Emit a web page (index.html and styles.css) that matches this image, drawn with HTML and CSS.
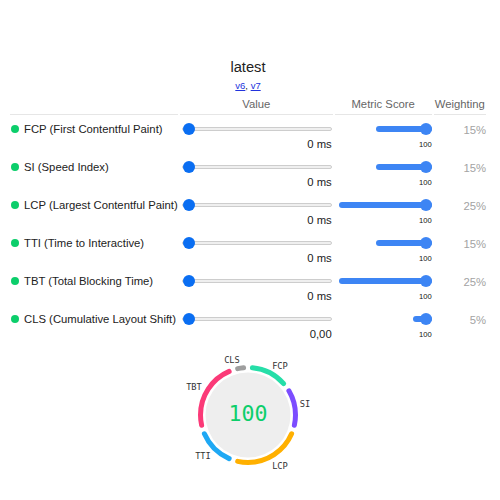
FILE: index.html
```html
<!DOCTYPE html>
<html lang="en">
<head>
    <meta charset="UTF-8">
    <meta name="viewport" content="width=device-width, initial-scale=1.0">
    <title>Lighthouse Scoring Calculator</title>
    <link rel="stylesheet" href="styles.css">
</head>
<body>
    <div class="container">
        <h1>latest</h1>
        <div class="versions"><a href="#">v6</a>, <a href="#">v7</a></div>
        <table class="metrics">
            <thead>
                <tr>
                    <th class="col-name"></th>
                    <th class="col-value">Value</th>
                    <th class="col-score">Metric Score</th>
                    <th class="col-weight">Weighting</th>
                </tr>
            </thead>
            <tbody>
                <tr>
                    <td><div class="name"><span class="dot"></span>FCP (First Contentful Paint)</div></td>
                    <td><input class="range" type="range" min="0" max="6000" value="0"><div class="out">0 ms</div></td>
                    <td><input class="range range-score" type="range" min="0" max="100" value="100" style="width: 56px"><div class="num">100</div></td>
                    <td class="weight">15%</td>
                </tr>
                <tr>
                    <td><div class="name"><span class="dot"></span>SI (Speed Index)</div></td>
                    <td><input class="range" type="range" min="0" max="12000" value="0"><div class="out">0 ms</div></td>
                    <td><input class="range range-score" type="range" min="0" max="100" value="100" style="width: 56px"><div class="num">100</div></td>
                    <td class="weight">15%</td>
                </tr>
                <tr>
                    <td><div class="name"><span class="dot"></span>LCP (Largest Contentful Paint)</div></td>
                    <td><input class="range" type="range" min="0" max="10000" value="0"><div class="out">0 ms</div></td>
                    <td><input class="range range-score" type="range" min="0" max="100" value="100" style="width: 93px"><div class="num">100</div></td>
                    <td class="weight">25%</td>
                </tr>
                <tr>
                    <td><div class="name"><span class="dot"></span>TTI (Time to Interactive)</div></td>
                    <td><input class="range" type="range" min="0" max="20000" value="0"><div class="out">0 ms</div></td>
                    <td><input class="range range-score" type="range" min="0" max="100" value="100" style="width: 56px"><div class="num">100</div></td>
                    <td class="weight">15%</td>
                </tr>
                <tr>
                    <td><div class="name"><span class="dot"></span>TBT (Total Blocking Time)</div></td>
                    <td><input class="range" type="range" min="0" max="2000" value="0"><div class="out">0 ms</div></td>
                    <td><input class="range range-score" type="range" min="0" max="100" value="100" style="width: 93px"><div class="num">100</div></td>
                    <td class="weight">25%</td>
                </tr>
                <tr>
                    <td><div class="name"><span class="dot"></span>CLS (Cumulative Layout Shift)</div></td>
                    <td><input class="range" type="range" min="0" max="1" step="0.01" value="0"><div class="out">0,00</div></td>
                    <td><input class="range range-score" type="range" min="0" max="100" value="100" style="width: 19px"><div class="num">100</div></td>
                    <td class="weight">5%</td>
                </tr>
            </tbody>
        </table>

        <svg class="gauge" width="140" height="124" viewBox="0 0 140 124">
            <circle cx="70" cy="62" r="42.5" fill="#eeeeee"/>
            <g fill="none" stroke-width="5" stroke-linecap="round" transform="rotate(-90 70 62)">
                <!-- dash = weight - 3, offset = -(start + 1.5) -->
                <circle cx="70" cy="62" r="47.5" pathLength="100" stroke="#26dea8" stroke-dasharray="12 100" stroke-dashoffset="-1.5"/>
                <circle cx="70" cy="62" r="47.5" pathLength="100" stroke="#7c4dff" stroke-dasharray="12 100" stroke-dashoffset="-16.5"/>
                <circle cx="70" cy="62" r="47.5" pathLength="100" stroke="#ffb000" stroke-dasharray="22 100" stroke-dashoffset="-31.5"/>
                <circle cx="70" cy="62" r="47.5" pathLength="100" stroke="#1ea8f4" stroke-dasharray="12 100" stroke-dashoffset="-56.5"/>
                <circle cx="70" cy="62" r="47.5" pathLength="100" stroke="#fb3a78" stroke-dasharray="22 100" stroke-dashoffset="-71.5"/>
                <circle cx="70" cy="62" r="47.5" pathLength="100" stroke="#9e9e9e" stroke-dasharray="2 100" stroke-dashoffset="-96.5"/>
            </g>
            <g class="gauge-labels">
                <text x="54" y="7">CLS</text>
                <text x="102" y="12.5">FCP</text>
                <text x="127" y="51">SI</text>
                <text x="102" y="113">LCP</text>
                <text x="25" y="102.5">TTI</text>
                <text x="16" y="34">TBT</text>
            </g>
            <text class="gauge-score" x="70" y="60">100</text>
        </svg>
    </div>
</body>
</html>
```

FILE: styles.css
```css
body {
    font-family: "Liberation Sans", Arial, sans-serif;
    font-size: 11.3px;
    color: #222;
    background-color: white;
    margin: 8px;
}

.container {
    width: 480px;
    padding-top: 50px;
}

h1 {
    margin: 0;
    font-size: 14.7px;
    font-weight: normal;
    line-height: 18px;
    text-align: center;
    color: #222;
}

.versions {
    margin-top: 4px;
    font-size: 9.5px;
    line-height: 12px;
    text-align: center;
}

.versions a {
    color: #2233dd;
}

.metrics {
    margin: 5px auto 0;
    border-collapse: separate;
    border-spacing: 2px 0;
}

.metrics th {
    padding: 0 0 3px;
    font-weight: normal;
    line-height: 14px;
    color: #666;
    text-align: center;
    border-bottom: 1px solid #e6e6e6;
}

.col-name { width: 168px; }
.col-value { width: 153px; }
.col-score { width: 98px; }
.col-weight { width: 53px; }

.metrics td {
    height: 38px;
    padding: 0;
    vertical-align: top;
}

.name {
    display: flex;
    align-items: center;
    gap: 5px;
    margin-top: 7px;
    line-height: 14px;
    white-space: nowrap;
}

.dot {
    width: 8px;
    height: 8px;
    margin-left: 1px;
    border-radius: 50%;
    background-color: #0cce6b;
}

.range {
    -webkit-appearance: none;
    appearance: none;
    display: block;
    height: 12px;
    margin: 0;
    padding: 0;
    background: transparent;
}

.range::-webkit-slider-runnable-track {
    height: 4px;
    border: 1px solid #cdcdcd;
    border-radius: 3px;
    background: #efefef;
}

.range::-webkit-slider-thumb {
    -webkit-appearance: none;
    width: 12px;
    height: 12px;
    margin-top: -5px;
    border: none;
    border-radius: 50%;
    background: #0a6ef2;
}

.range-score::-webkit-slider-runnable-track {
    height: 6px;
    border: none;
    background: #3d85f4;
}

.range-score::-webkit-slider-thumb {
    margin-top: -3px;
    background: #3d85f4;
}

.range:not(.range-score) {
    width: 150px;
    margin: 8px 0 0 2px;
}

.out {
    margin-top: 2px;
    padding-right: 1px;
    line-height: 14px;
    text-align: right;
}

.range-score {
    margin: 8px 0 0 auto;
}

.num {
    margin-top: 5px;
    font-size: 7.6px;
    line-height: 10px;
    text-align: right;
    color: #111;
}

.metrics .weight {
    padding-top: 8px;
    height: 30px;
    line-height: 14px;
    text-align: right;
    color: #a3a3a3;
}

.gauge {
    display: block;
    margin: 10px auto 0;
}

.gauge-labels text {
    font-family: "DejaVu Sans Mono", monospace;
    font-size: 8.7px;
    fill: #333;
    text-anchor: middle;
    dominant-baseline: central;
}

.gauge-score {
    font-family: "DejaVu Sans Mono", monospace;
    font-size: 21.6px;
    fill: #0cce6b;
    text-anchor: middle;
    dominant-baseline: central;
}
```
